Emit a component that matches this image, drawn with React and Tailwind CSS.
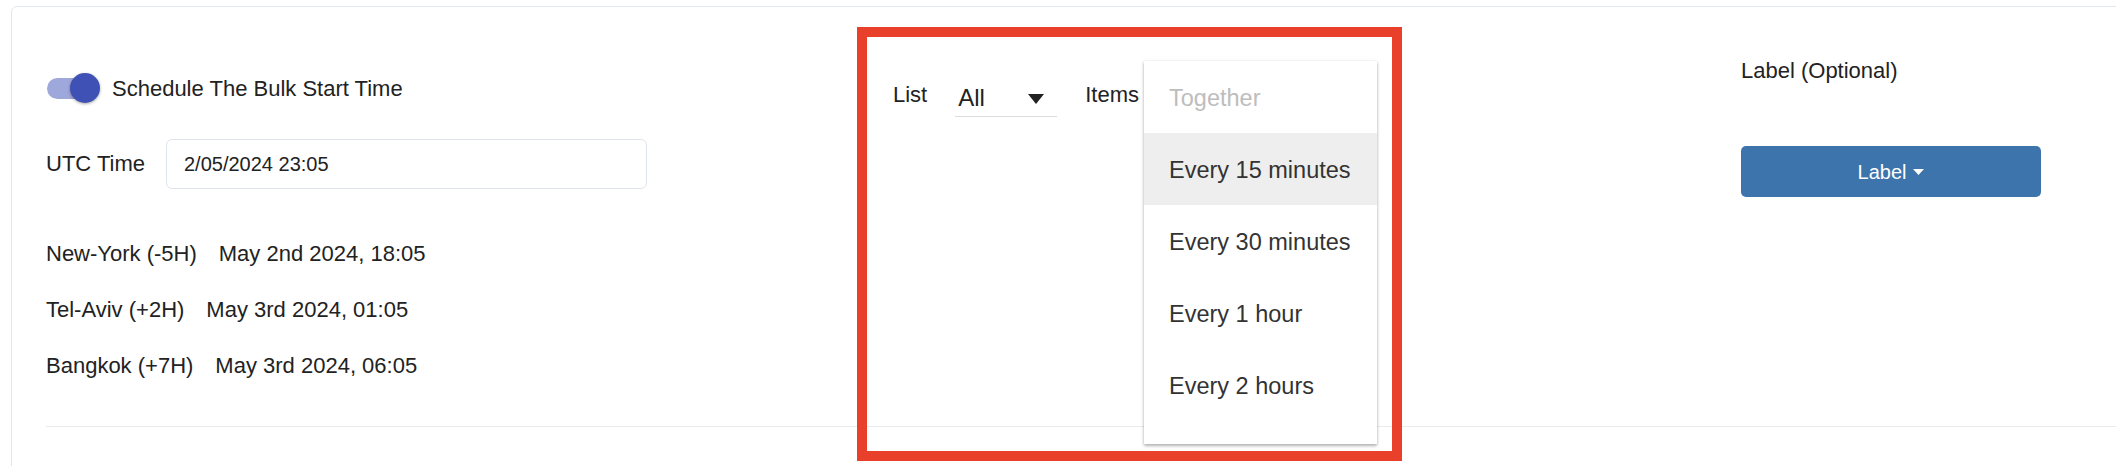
import React from 'react';

const zones = [
  { name: 'New-York (-5H)', date: 'May 2nd 2024, 18:05' },
  { name: 'Tel-Aviv (+2H)', date: 'May 3rd 2024, 01:05' },
  { name: 'Bangkok (+7H)', date: 'May 3rd 2024, 06:05' },
];

const intervals = ['Every 15 minutes', 'Every 30 minutes', 'Every 1 hour', 'Every 2 hours'];

export default function App() {
  return (
    <div className="relative w-[2116px] h-[466px] overflow-hidden bg-white text-[#222] font-['Liberation_Sans',Arial,sans-serif]">
      {/* Card */}
      <div className="ml-[11px] mt-[6px] w-[2200px] rounded-[6px] border border-[#e2e7ed] pl-[34px] pt-[50px] pb-[80px]">
        <div className="flex items-start">
          {/* Schedule column */}
          <div className="w-[847px] shrink-0 pt-[16px]">
            <div className="flex items-center h-[30px]">
              <div className="relative w-[54px] h-[30px] shrink-0">
                <div className="ml-[1px] mt-[4.5px] w-[50px] h-[21px] rounded-full bg-[#9fa8da]" />
                <div className="absolute right-0 top-0 w-[30px] h-[30px] rounded-full bg-[#3f51b5] shadow-[0_1px_3px_rgba(0,0,0,0.35)]" />
              </div>
              <span className="ml-[12px] pt-[2px] text-[22px] leading-[30px]">Schedule The Bulk Start Time</span>
            </div>

            <div className="mt-[36px] flex items-center">
              <span className="text-[22px] leading-[50px]">UTC Time</span>
              <div className="ml-[21px] w-[481px] h-[50px] rounded-[6px] border border-[#dfe4ea] pl-[17px] flex items-center text-[20px]">
                2/05/2024 23:05
              </div>
            </div>

            <div className="mt-[37px]">
              {zones.map((z) => (
                <div key={z.name} className="flex gap-[22px] h-[56px] text-[22px] leading-[56px]">
                  <span>{z.name}</span>
                  <span>{z.date}</span>
                </div>
              ))}
            </div>
          </div>

          {/* List / Items column */}
          <div className="relative w-[848px] shrink-0 pt-[25px]">
            <div className="flex items-start">
              <span className="text-[22px] leading-[26px]">List</span>
              <div className="relative ml-[28px] mt-[2px] w-[102px] pl-[3px] pb-[3px] border-b border-[#dcdcdc]">
                <span className="text-[24px] leading-[28px]">All</span>
                <svg className="absolute right-[13px] top-[10px]" width="16" height="10" viewBox="0 0 16 10">
                  <polygon points="0,0 16,0 8,10" fill="#222" />
                </svg>
              </div>
              <span className="ml-[28px] text-[22px] leading-[26px]">Items</span>
            </div>

            {/* open dropdown */}
            <div className="absolute left-[251px] top-[4px] w-[233px] bg-white pb-[23px] shadow-[0_2px_3px_rgba(0,0,0,0.28),0_0_3px_rgba(0,0,0,0.1)]">
              <div className="h-[72px] pl-[25px] pt-[4px] flex items-center text-[23.5px] text-[#bdbdbd]">Together</div>
              {intervals.map((label, i) => (
                <div
                  key={label}
                  className={
                    'h-[72px] pl-[25px] pt-[4px] flex items-center text-[23.5px] text-[#333] ' +
                    (i === 0 ? 'bg-[#eeeeee]' : '')
                  }
                >
                  {label}
                </div>
              ))}
            </div>
          </div>

          {/* Label column */}
          <div className="shrink-0 pt-[1px]">
            <div className="text-[22px] leading-[26px]">Label (Optional)</div>
            <button className="mt-[62px] w-[300px] h-[51px] rounded-[5px] bg-[#3d74ab] text-white text-[20px] flex items-center justify-center gap-[7px]">
              <span>Label</span>
              <svg width="11" height="6" viewBox="0 0 11 6">
                <polygon points="0,0 11,0 5.5,6" fill="#fff" />
              </svg>
            </button>
          </div>
        </div>

        <div className="mt-[32px] border-t border-[#e8ecef]" />
      </div>

      {/* red highlight frame */}
      <div className="absolute left-[857px] top-[27px] w-[545px] h-[434px] border-[10px] border-[#e8402a]" />
    </div>
  );
}
